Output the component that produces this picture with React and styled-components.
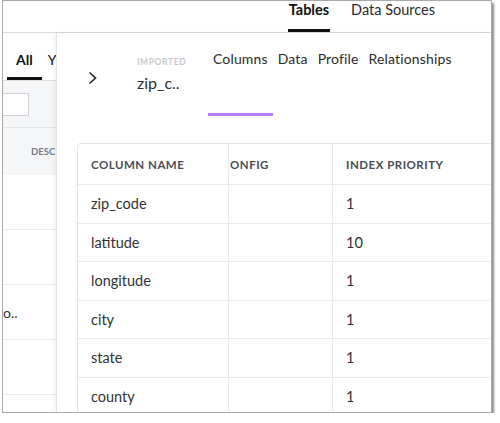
import React from "react";
import styled, { createGlobalStyle } from "styled-components";

const Global = createGlobalStyle`
  html, body { margin: 0; padding: 0; background: #fff; }
  body { font-family: Lato, "Open Sans", sans-serif; }
`;

const Frame = styled.div`
  margin-left: 2px;
  width: 490px;
  height: 413px;
  box-sizing: border-box;
  border: 1px solid #a9a9a9;
  box-shadow: 2px 3px 2px rgba(0, 0, 0, 0.45);
  background: #fff;
  overflow: hidden;
  display: flex;
  flex-direction: column;
`;

const TopBar = styled.div`
  height: 32px;
  flex: none;
  box-sizing: border-box;
  border-bottom: 1px solid #d9d9d9;
  display: flex;
  justify-content: flex-end;
  padding-right: 55px;
  gap: 20px;
`;

const TopTab = styled.div`
  height: 31px;
  box-sizing: border-box;
  padding: 1px 1px 0;
  font-size: 14.5px;
  line-height: 16px;
  font-weight: ${(p) => (p.$active ? 700 : 400)};
  color: ${(p) => (p.$active ? "#111" : "#2b2b2b")};
  border-bottom: 3px solid ${(p) => (p.$active ? "#111" : "transparent")};
`;

const Body = styled.div`
  flex: 1;
  display: flex;
  min-height: 0;
`;

const BackPanel = styled.div`
  width: 53px;
  flex: none;
  overflow: hidden;
  display: flex;
  flex-direction: column;
`;

const BackTabs = styled.div`
  height: 48px;
  flex: none;
  box-sizing: border-box;
  border-bottom: 1px solid #dcdcdc;
  display: flex;
  align-items: flex-end;
  padding-left: 4px;
  gap: 2px;
  white-space: nowrap;
`;

const BackTab = styled.div`
  height: 35px;
  box-sizing: border-box;
  padding: 7px ${(p) => (p.$active ? "9px" : "0")} 0 ${(p) => (p.$active ? "9px" : "4px")};
  font-size: 14px;
  line-height: 16px;
  font-weight: ${(p) => (p.$active ? 700 : 400)};
  color: #111;
  border-bottom: 3px solid ${(p) => (p.$active ? "#111" : "transparent")};
`;

const Toolbar = styled.div`
  height: 47px;
  flex: none;
  box-sizing: border-box;
  background: #f5f6f8;
  border-bottom: 1px solid #e3e4e8;
  display: flex;
  align-items: center;
`;

const SearchBox = styled.div`
  width: 40px;
  height: 23px;
  margin-left: -14px;
  flex: none;
  box-sizing: border-box;
  background: #fff;
  border: 1px solid #cfd1d6;
`;

const BackHead = styled.div`
  height: 47px;
  flex: none;
  box-sizing: border-box;
  background: #f5f6f8;
  display: flex;
  align-items: center;
  padding-left: 28px;
  font-size: 9.5px;
  font-weight: 700;
  color: #767a86;
  white-space: nowrap;
`;

const BackRow = styled.div`
  height: 55px;
  flex: none;
  box-sizing: border-box;
  border-bottom: 1px solid #ececef;
  display: flex;
  align-items: center;
  font-size: 14px;
  color: #333;
  white-space: nowrap;
`;

const Detail = styled.div`
  flex: 1;
  min-width: 0;
  background: #fff;
  border-left: 1px solid #e4e4e6;
  box-shadow: -2px 0 4px rgba(0, 0, 0, 0.06);
  display: flex;
  flex-direction: column;
  overflow: hidden;
`;

const DetailHead = styled.div`
  display: flex;
  align-items: flex-start;
  padding: 17px 0 0 31px;
  height: 83px;
  box-sizing: border-box;
  flex: none;
`;

const ChevronBox = styled.div`
  width: 49px;
  flex: none;
  padding-top: 21px;
  display: flex;
`;

const TitleBlock = styled.div`
  width: 71px;
  flex: none;
  padding-top: 7px;
  display: flex;
  flex-direction: column;
  gap: 6px;
`;

const Kicker = styled.div`
  font-size: 8.5px;
  line-height: 10px;
  font-weight: 700;
  letter-spacing: 0.6px;
  color: #c6c8cd;
`;

const Title = styled.div`
  font-size: 16px;
  line-height: 20px;
  color: #2f2f2f;
`;

const Tabs = styled.div`
  display: flex;
`;

const Tab = styled.div`
  height: 66px;
  box-sizing: border-box;
  padding: 0 5px;
  font-size: 14px;
  letter-spacing: 0.15px;
  line-height: 18px;
  color: #2b2b2b;
  white-space: nowrap;
  border-bottom: 3px solid ${(p) => (p.$active ? "#b57bef" : "transparent")};
`;

const Table = styled.div`
  margin: 27px 0 0 20px;
  width: 460px;
  flex: none;
  border-top: 1px solid #e3e5e9;
  border-left: 1px solid #e3e5e9;
  border-top-left-radius: 4px;
  display: grid;
  grid-template-columns: 151px 104px 205px;
`;

const Cell = styled.div`
  height: ${(p) => (p.$head ? "41px" : "38.5px")};
  box-sizing: border-box;
  border-bottom: 1px solid #e9ebee;
  border-right: 1px solid #e9ebee;
  display: flex;
  align-items: center;
  padding-left: ${(p) => (p.$clip ? "1px" : "13px")};
  white-space: nowrap;
  overflow: hidden;
  font-size: ${(p) => (p.$head ? "11.5px" : "14.5px")};
  font-weight: ${(p) => (p.$head ? 700 : 400)};
  letter-spacing: ${(p) => (p.$head ? "0.5px" : "0")};
  color: ${(p) => (p.$head ? "#4a4d58" : "#333")};
`;

const rows = [
  ["zip_code", "1"],
  ["latitude", "10"],
  ["longitude", "1"],
  ["city", "1"],
  ["state", "1"],
  ["county", "1"],
];

export default function App() {
  return (
    <>
      <Global />
      <Frame>
        <TopBar>
          <TopTab $active>Tables</TopTab>
          <TopTab>Data Sources</TopTab>
        </TopBar>
        <Body>
          <BackPanel>
            <BackTabs>
              <BackTab $active>All</BackTab>
              <BackTab>Y</BackTab>
            </BackTabs>
            <Toolbar>
              <SearchBox />
            </Toolbar>
            <BackHead>DESC</BackHead>
            <BackRow />
            <BackRow />
            <BackRow>o..</BackRow>
            <BackRow />
          </BackPanel>
          <Detail>
            <DetailHead>
              <ChevronBox>
                <svg width="10" height="14" viewBox="0 0 10 14">
                  <polyline
                    points="1.5,1.5 7.5,7 1.5,12.5"
                    fill="none"
                    stroke="#222"
                    strokeWidth="1.6"
                  />
                </svg>
              </ChevronBox>
              <TitleBlock>
                <Kicker>IMPORTED</Kicker>
                <Title>zip_c..</Title>
              </TitleBlock>
              <Tabs>
                <Tab $active>Columns</Tab>
                <Tab>Data</Tab>
                <Tab>Profile</Tab>
                <Tab>Relationships</Tab>
              </Tabs>
            </DetailHead>
            <Table>
              <Cell $head>COLUMN NAME</Cell>
              <Cell $head $clip>ONFIG</Cell>
              <Cell $head>INDEX PRIORITY</Cell>
              {rows.map(([name, prio]) => (
                <React.Fragment key={name}>
                  <Cell>{name}</Cell>
                  <Cell />
                  <Cell>{prio}</Cell>
                </React.Fragment>
              ))}
            </Table>
          </Detail>
        </Body>
      </Frame>
    </>
  );
}
